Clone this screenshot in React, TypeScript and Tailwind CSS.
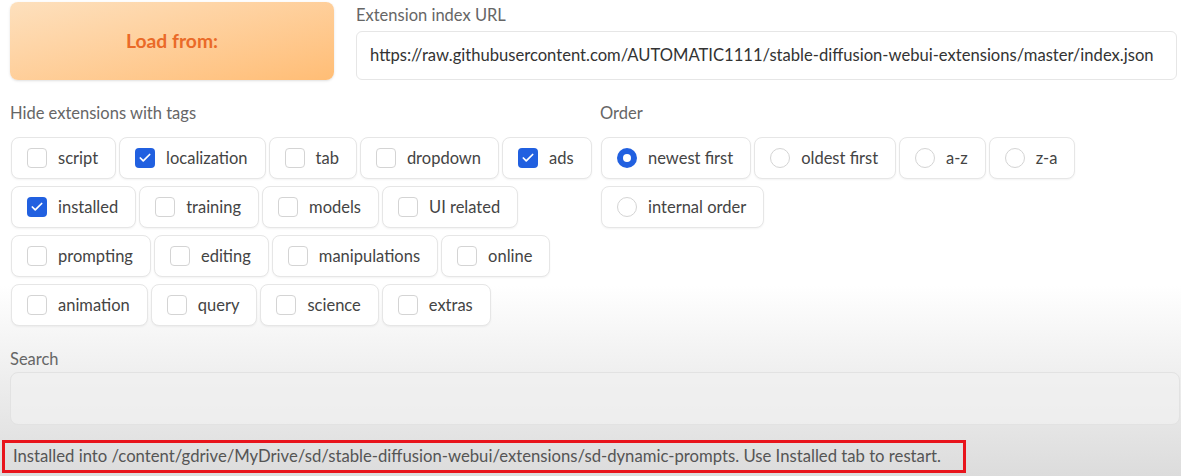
import { Check } from "lucide-react";

const tagRows: [string, boolean][][] = [
  [
    ["script", false],
    ["localization", true],
    ["tab", false],
    ["dropdown", false],
    ["ads", true],
  ],
  [
    ["installed", true],
    ["training", false],
    ["models", false],
    ["UI related", false],
  ],
  [
    ["prompting", false],
    ["editing", false],
    ["manipulations", false],
    ["online", false],
  ],
  [
    ["animation", false],
    ["query", false],
    ["science", false],
    ["extras", false],
  ],
];

const orderRows: [string, boolean][][] = [
  [
    ["newest first", true],
    ["oldest first", false],
    ["a-z", false],
    ["z-a", false],
  ],
  [["internal order", false]],
];

function Chip({ label, checked, radio }: { label: string; checked: boolean; radio?: boolean }) {
  return (
    <label className="flex items-center h-[42px] pl-[15px] pr-[17px] gap-[11px] bg-white border border-[#e6e6e6] rounded-lg shadow-[0_1px_2px_rgba(0,0,0,0.05)] text-[#444] text-[16.5px]">
      {radio ? (
        checked ? (
          <span className="w-[20px] h-[20px] rounded-full bg-[#2160e0] flex items-center justify-center">
            <span className="w-[8px] h-[8px] rounded-full bg-white" />
          </span>
        ) : (
          <span className="w-[20px] h-[20px] rounded-full border border-[#d4d4d4] bg-white" />
        )
      ) : checked ? (
        <span className="w-[20px] h-[20px] rounded-[4px] bg-[#2160e0] flex items-center justify-center">
          <Check size={14} strokeWidth={3} className="text-white" />
        </span>
      ) : (
        <span className="w-[20px] h-[20px] rounded-[4px] border border-[#d4d4d4] bg-white" />
      )}
      <span>{label}</span>
    </label>
  );
}

export default function App() {
  return (
    <div
      className="w-[1181px] h-[476px] overflow-hidden bg-gradient-to-b from-white from-60% to-[#dcdcdc] text-[16px]"
      style={{ fontFamily: "Lato, 'Noto Sans', sans-serif" }}
    >
      <div className="flex gap-[22px] pl-[10px] pr-[4px] pt-[2px]">
        <button className="w-[324px] h-[78px] rounded-lg bg-gradient-to-br from-[#fde0bd] to-[#ffbd75] text-[#ea6a28] font-bold text-[19.3px] shadow-sm">
          Load from:
        </button>
        <div className="flex-1 flex flex-col">
          <div className="text-[16.5px] text-[#666] h-[29px] leading-[26px]">Extension index URL</div>
          <div className="h-[49px] border border-[#e6e6e6] rounded-md bg-white flex items-center px-[13px] text-[#333] text-[16.6px]">
            https://raw.githubusercontent.com/AUTOMATIC1111/stable-diffusion-webui-extensions/master/index.json
          </div>
        </div>
      </div>

      <div className="flex pl-[10px] mt-[22px]">
        <div className="w-[590px]">
          <div className="text-[16.5px] text-[#666] h-[35px] leading-[22px]">Hide extensions with tags</div>
          <div className="flex flex-col gap-[7px] pl-[1px]">
            {tagRows.map((row, i) => (
              <div key={i} className="flex gap-[3px]">
                {row.map(([l, c]) => (
                  <Chip key={l} label={l} checked={c} />
                ))}
              </div>
            ))}
          </div>
        </div>
        <div className="flex-1">
          <div className="text-[16.5px] text-[#666] h-[35px] leading-[22px]">Order</div>
          <div className="flex flex-col gap-[7px] pl-[1px]">
            {orderRows.map((row, i) => (
              <div key={i} className="flex gap-[3px]">
                {row.map(([l, c]) => (
                  <Chip key={l} label={l} checked={c} radio />
                ))}
              </div>
            ))}
          </div>
        </div>
      </div>

      <div className="px-[10px] pr-[1px] mt-[22px]">
        <div className="text-[16.5px] text-[#666] h-[24px] leading-[22px]">Search</div>
        <div className="h-[53px] border border-[#e2e2e2] rounded-lg bg-[#f1f1f1]/70" />
      </div>

      <div className="ml-[2px] mt-[15px] w-[964px] h-[33px] border-[3px] border-[#e8141c] flex items-center pl-[8px] text-[16.7px] text-[#555]">
        Installed into /content/gdrive/MyDrive/sd/stable-diffusion-webui/extensions/sd-dynamic-prompts. Use Installed tab to restart.
      </div>
    </div>
  );
}
